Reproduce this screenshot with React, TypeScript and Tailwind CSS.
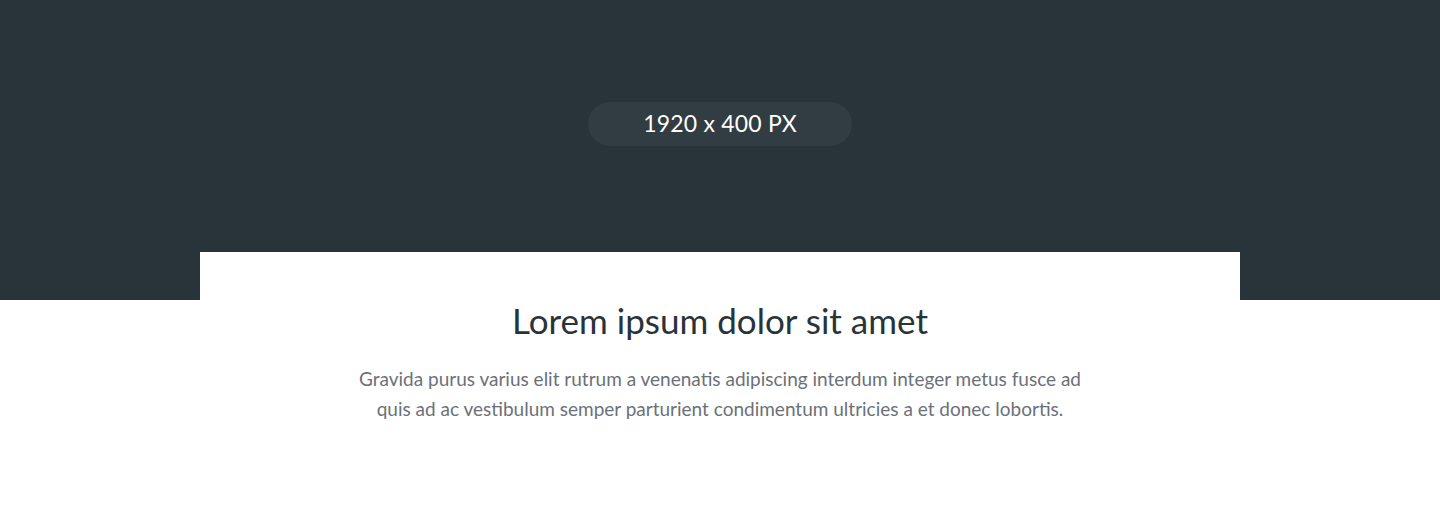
export default function App() {
  return (
    <div className="min-h-[522px] bg-white" style={{ fontFamily: "Lato, 'Open Sans', sans-serif" }}>
      <div className="h-[300px] bg-[#29333a] flex justify-center pt-[102px]">
        <div className="h-[44px] w-[264px] rounded-full bg-[#323c43] flex items-center justify-center pb-[1px] text-[23px] text-white tracking-[0.2px]">
          1920 x 400 PX
        </div>
      </div>
      <div className="mx-[200px] -mt-[48px] bg-white pt-[48px] pb-[80px] flex flex-col items-center">
        <h1 className="text-[35px] leading-[40px] text-[#29333a] font-normal">Lorem ipsum dolor sit amet</h1>
        <p className="mt-[24px] max-w-[740px] text-center text-[19px] leading-[30px] text-[#6b7178]">
          Gravida purus varius elit rutrum a venenatis adipiscing interdum integer metus fusce ad quis ad ac
          vestibulum semper parturient condimentum ultricies a et donec lobortis.
        </p>
      </div>
    </div>
  );
}
